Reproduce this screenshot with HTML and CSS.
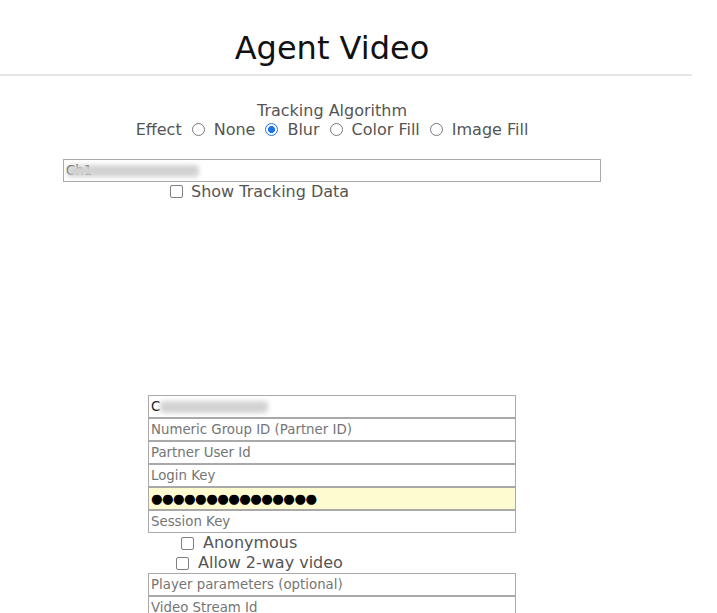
FILE: index.html
```html
<!DOCTYPE html>
<html>
<head>
<meta charset="utf-8">
<link rel="stylesheet" href="styles.css">
</head>
<body>
<header class="header">
  <h1 class="title">Agent Video</h1>
  <hr class="rule">
</header>
<main class="main">
  <section class="tracking">
    <div class="tracking-label">Tracking Algorithm</div>
    <div class="effect-row">
      <span>Effect</span>
      <label class="opt"><input class="radio" type="radio" name="fx">None</label>
      <label class="opt"><input class="radio" type="radio" name="fx" checked>Blur</label>
      <label class="opt"><input class="radio" type="radio" name="fx">Color Fill</label>
      <label class="opt"><input class="radio" type="radio" name="fx">Image Fill</label>
    </div>
    <div class="redacted-wrap wide">
      <input class="field wide-field" type="text" value="Ch1">
      <span class="blur blur-a"></span>
    </div>
    <label class="check show-data"><input class="box" type="checkbox">Show Tracking Data</label>
  </section>
  <div class="video-area"></div>
  <section class="login">
    <div class="redacted-wrap">
      <input class="field" type="text" value="C">
      <span class="blur blur-b"></span>
    </div>
    <input class="field" type="text" placeholder="Numeric Group ID (Partner ID)">
    <input class="field" type="text" placeholder="Partner User Id">
    <input class="field" type="text" placeholder="Login Key">
    <input class="field autofill" type="text" value="●●●●●●●●●●●●●●●">
    <input class="field" type="text" placeholder="Session Key">
    <label class="check anon"><input class="box" type="checkbox">Anonymous</label>
    <label class="check twoway"><input class="box" type="checkbox">Allow 2-way video</label>
    <input class="field" type="text" placeholder="Player parameters (optional)">
    <input class="field" type="text" placeholder="Video Stream Id">
  </section>
</main>
</body>
</html>
```
FILE: styles.css
```css
html, body {
  margin: 0;
  padding: 0;
  background: #fff;
  font-family: "DejaVu Sans", sans-serif;
  color: #333;
}
body { overflow: hidden; }
.header {
  width: 692px;
}
.title {
  margin: 0;
  padding-top: 29px;
  width: 664px;
  text-align: center;
  font-size: 32px;
  font-weight: normal;
  color: #111;
  line-height: 38px;
}
.rule {
  margin: 7px 0 0 0;
  border: 0;
  height: 2px;
  background: #e6e6e6;
}
.main {
  width: 664px;
  display: flex;
  flex-direction: column;
  align-items: center;
}
.tracking {
  display: flex;
  flex-direction: column;
  align-items: center;
  padding-top: 26px;
}
.tracking-label {
  font-size: 16px;
  line-height: 18px;
  color: #555;
}
.effect-row {
  display: flex;
  align-items: center;
  gap: 10px;
  font-size: 16px;
  line-height: 19px;
  color: #555;
}
.opt {
  display: flex;
  align-items: center;
  gap: 9px;
}
.radio {
  appearance: none;
  -webkit-appearance: none;
  box-sizing: border-box;
  margin: 0;
  width: 13px;
  height: 13px;
  border: 1.5px solid #7a7a7a;
  border-radius: 50%;
  background: #fff;
}
.radio:checked {
  border-color: #1a73e8;
  background: radial-gradient(circle, #1a73e8 0 3.2px, #fff 3.8px);
}
.box {
  appearance: none;
  -webkit-appearance: none;
  box-sizing: border-box;
  margin: 0;
  width: 13px;
  height: 13px;
  border: 1.5px solid #808080;
  border-radius: 2px;
  background: #fff;
}
.redacted-wrap {
  position: relative;
  display: flex;
  width: 368px;
}
.redacted-wrap.wide {
  width: 538px;
  margin-top: 20px;
}
.field {
  box-sizing: border-box;
  width: 368px;
  height: 23px;
  margin: 0;
  padding: 1px 2px;
  border: 1px solid #a9a9a9;
  font-family: "DejaVu Sans", sans-serif;
  font-size: 13.33px;
  color: #222;
  background: #fff;
  outline: none;
}
.field::placeholder { color: #757575; }
.wide-field { width: 538px; }
.autofill {
  background: #fdfbcf;
  color: #000;
  letter-spacing: -0.6px;
}
.blur {
  position: absolute;
  background: #d2d2d2;
  filter: blur(2.5px);
  border-radius: 4px;
}
.blur-a { left: 4px; top: 6px; width: 132px; height: 12px; }
.blur-b { left: 12px; top: 6px; width: 108px; height: 12px; }
.check {
  display: flex;
  align-items: center;
  gap: 9px;
  font-size: 16px;
  color: #555;
}
.show-data {
  align-self: flex-start;
  margin-left: 107px;
  line-height: 19px;
  gap: 8px;
}
.video-area { height: 194px; }
.login {
  display: flex;
  flex-direction: column;
  align-items: center;
}
.anon {
  align-self: flex-start;
  margin-left: 33px;
  line-height: 20px;
}
.twoway {
  align-self: flex-start;
  margin-left: 28px;
  line-height: 20px;
}
```
